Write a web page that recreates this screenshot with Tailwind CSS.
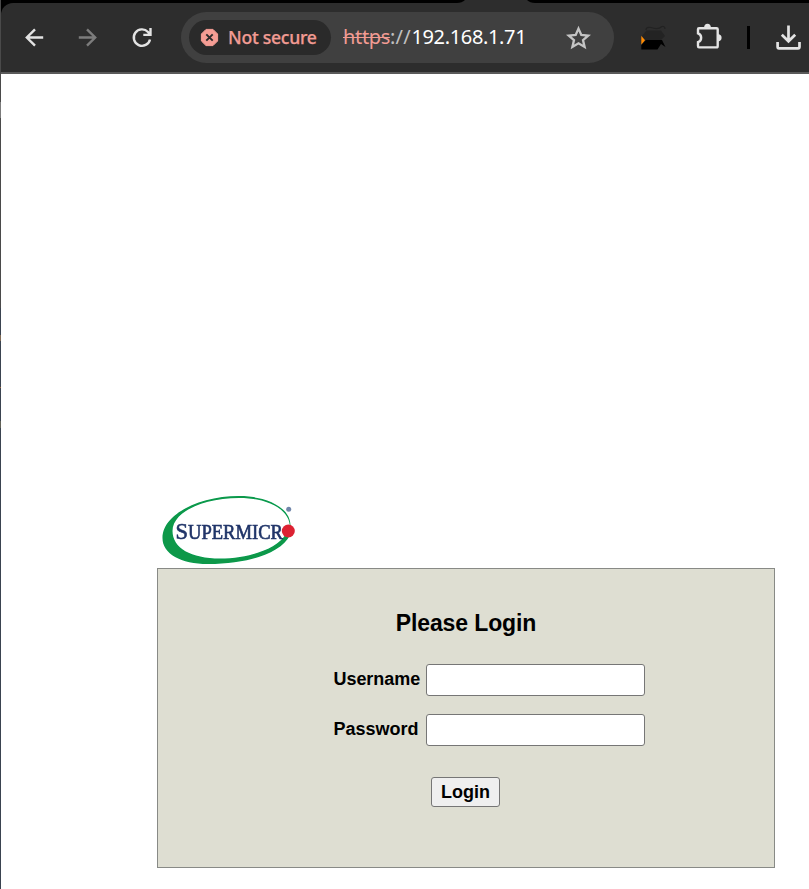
<!DOCTYPE html>
<html lang="en">
<head>
<meta charset="utf-8">
<title>Login</title>
<script src="https://cdn.jsdelivr.net/npm/@tailwindcss/browser@4"></script>
</head>
<body class="w-[809px] h-[889px] overflow-hidden bg-white flex font-['Liberation_Sans',Arial,sans-serif] text-black">
<div class="w-px shrink-0 h-full flex flex-col bg-[#3a4350]">
  <div class="h-[102px] bg-[#4a4a4a]"></div><div class="h-4 bg-[#7b7b7b]"></div><div class="h-[190px] bg-[#4a4a4a]"></div><div class="h-[27px]"></div><div class="h-[6px] bg-[#806a55]"></div><div class="h-[46px]"></div><div class="h-px bg-[#a06a40]"></div><div class="h-[33px]"></div><div class="h-[7px] bg-[#626258]"></div>
</div>
<div class="w-[808px] shrink-0 flex flex-col">
  <header class="h-[74px] shrink-0 bg-black flex flex-col">
    <svg class="w-[808px] h-[3px] block" viewBox="1 0 808 3"><path d="M457 3Q462 3 465 0H527Q530 3 535 3Z" fill="#2d2d2d"/></svg>
    <div class="h-[71px] bg-[#2d2d2d] rounded-tl-[12px] border-b-2 border-[#5a5a5a] flex items-start">
      <svg class="w-5 h-5 ml-6 mt-[25px]" viewBox="25 28 20 20" fill="none" stroke="#e3e3e3" stroke-width="2.4"><path d="M43.2 37.5H27M35 29.3L26.8 37.5L35 45.7"/></svg>
      <svg class="w-5 h-5 ml-[33px] mt-[25px]" viewBox="78 28 20 20" fill="none" stroke="#7c7c7c" stroke-width="2.4"><path d="M78.8 37.5H95M87 29.3L95.2 37.5L87 45.7"/></svg>
      <svg class="w-[22px] h-[22px] ml-[33px] mt-6" viewBox="131 27 22 22" fill="none" stroke="#e3e3e3" stroke-width="2.4"><path d="M150 39.4A8.2 8.2 0 1 1 148 32L150 34.4M150.5 28V34.9H143.3"/></svg>
      <div class="w-[433px] h-[51px] ml-7 mt-[9px] rounded-full bg-[#404040] flex items-center pl-2">
        <div class="w-[142px] h-[35px] rounded-full bg-[#2a2a2a] flex items-center pl-[11px] font-['Noto_Sans','Open_Sans',sans-serif]">
          <svg class="w-[19px] h-[19px] shrink-0" viewBox="200 28 19 19"><path d="M206 29.4H213L217.6 34V41L213 45.6H206L201.4 41V34Z" fill="#f59d94" stroke="#f59d94" stroke-linejoin="round"/><path d="M206.3 34.3L212.7 40.7M212.7 34.3L206.3 40.7" stroke="#2a2a2a" stroke-width="1.9"/></svg>
          <span class="ml-[9px] mt-[-1px] text-[17.6px] leading-[24px] font-medium text-[#f29b93] whitespace-nowrap tracking-[-0.26px] [-webkit-text-stroke:0.25px_#f29b93]">Not secure</span>
        </div>
        <div class="ml-3 mt-[-1px] w-[184px] font-['Noto_Sans','Open_Sans',sans-serif] text-[20px] leading-[28px] whitespace-nowrap flex tracking-[-0.35px]"><span class="text-[#f29b93] line-through decoration-1">https</span><span class="text-[#c0c0c0] w-[21.5px] tracking-[0.3px]">://</span><span class="text-white">192.168.1.71</span></div>
        <svg class="w-[26px] h-[26px] ml-[38px]" viewBox="565 24.5 26 26" fill="none" stroke="#c4c4c4" stroke-width="2.3"><path d="M578.5 28.1L581.3 34.5L588.2 35.1L583 39.6L584.6 46.4L578.5 42.8L572.4 46.4L574 39.6L568.8 35.1L575.7 34.5Z"/></svg>
      </div>
      <svg class="w-[27px] h-[27px] ml-[26px] mt-[20px]" viewBox="640 23 27 27"><path d="M642 36L646.5 30.5H661L665 36L661 40H645Z" fill="#232323"/><path d="M646 30Q646 26.5 651 27.5Q658 30 662 26.5Q665 26 665 29" fill="none" stroke="#222" stroke-width="1.2"/><path d="M641.3 35.7L645 40.3L641.3 44.8Z" fill="#ff8a00"/><path d="M646 40H662L665.5 47L661 44L657.5 49.5H641.3V45Z" fill="#000"/></svg>
      <svg class="w-[28px] h-[28px] ml-[28px] mt-5" viewBox="695 23 28 28"><path d="M699 28.2H716.5Q717.7 28.2 717.7 29.2V46Q717.7 47.4 716.5 47.4H699Q698 47.4 698 46V42.2C702.2 40.8 702.2 34.8 698 33.4V29.2Q698 28.2 699 28.2Z" fill="none" stroke="#e3e3e3" stroke-width="2.4"/><path d="M704 28Q704.3 23.8 707.5 23.8Q710.7 23.8 711 28ZM718 34Q721.6 34.5 721.6 37.7Q721.6 41 718 41.4Z" fill="#e3e3e3"/></svg>
      <div class="w-[3px] h-[23px] ml-6 mt-[23px] bg-black"></div>
      <svg class="w-[27px] h-[27px] ml-[25px] mt-[22px] shrink-0" viewBox="775 25 27 27" fill="none" stroke="#e3e3e3" stroke-width="2.7"><path d="M788.5 25.5V41M781.8 34.7L788.5 41.3L795.2 34.7M777.6 42V46.8Q777.6 48.3 779 48.3H798Q799.5 48.3 799.5 46.8V42"/></svg>
    </div>
  </header>
  <main class="pt-[420px] pl-[156px]">
    <svg class="block w-[142px] h-[74px]" viewBox="157 494 142 74"><defs><filter id="soft"><feGaussianBlur stdDeviation=".5"/></filter></defs><g filter="url(#soft)">
      <path fill-rule="evenodd" fill="#07984a" d="M290.5 525C290 507 266 496 239 496C200 496 162.5 514 162.5 538C162.5 554 181 564 208 564C246 564 281 554 290 535L286 534C277 549 249 558.5 220 558.5C191 558.5 172.5 548 172.5 531C172.5 512 203 498 239 498C266 498 288 508 289.8 525Z"/>
      <g fill="#203468" stroke="#203468" stroke-width=".65" font-family="Liberation Serif, serif"><text x="175.5" y="538.5" font-size="24" textLength="12.5" lengthAdjust="spacingAndGlyphs">S</text><text x="188" y="538.5" font-size="20.5" textLength="95" lengthAdjust="spacingAndGlyphs">UPERMICR</text></g>
      <circle cx="288.3" cy="531" r="6.5" fill="#dc2432"/><circle cx="288.7" cy="509.3" r="2.5" fill="#7186aa"/></g></svg>
    <form class="w-[618px] h-[300px] bg-[#deded2] border border-[#888a86] flex flex-col pt-[40px]">
      <h1 class="text-[23px] leading-[28px] font-bold text-center tracking-[-0.12px]">Please Login</h1>
      <div class="flex mt-[27px] ml-[175.5px] items-center"><label class="w-[92.5px] text-[18px] leading-5 font-bold pb-[2px] tracking-[-0.05px]">Username</label><input class="w-[219px] h-8 bg-white border border-[#767676] rounded-[3px] block"></div>
      <div class="flex mt-[18px] ml-[175.5px] items-center"><label class="w-[92.5px] text-[18px] leading-5 font-bold pb-[2px]">Password</label><input type="password" class="w-[219px] h-8 bg-white border border-[#767676] rounded-[3px] block"></div>
      <button type="button" class="w-[69px] h-[30px] ml-[273px] mt-[31px] bg-[#efefef] border border-[#767676] rounded-[3px] text-[18px] leading-5 font-bold">Login</button>
    </form>
  </main>
</div>
</body>
</html>
